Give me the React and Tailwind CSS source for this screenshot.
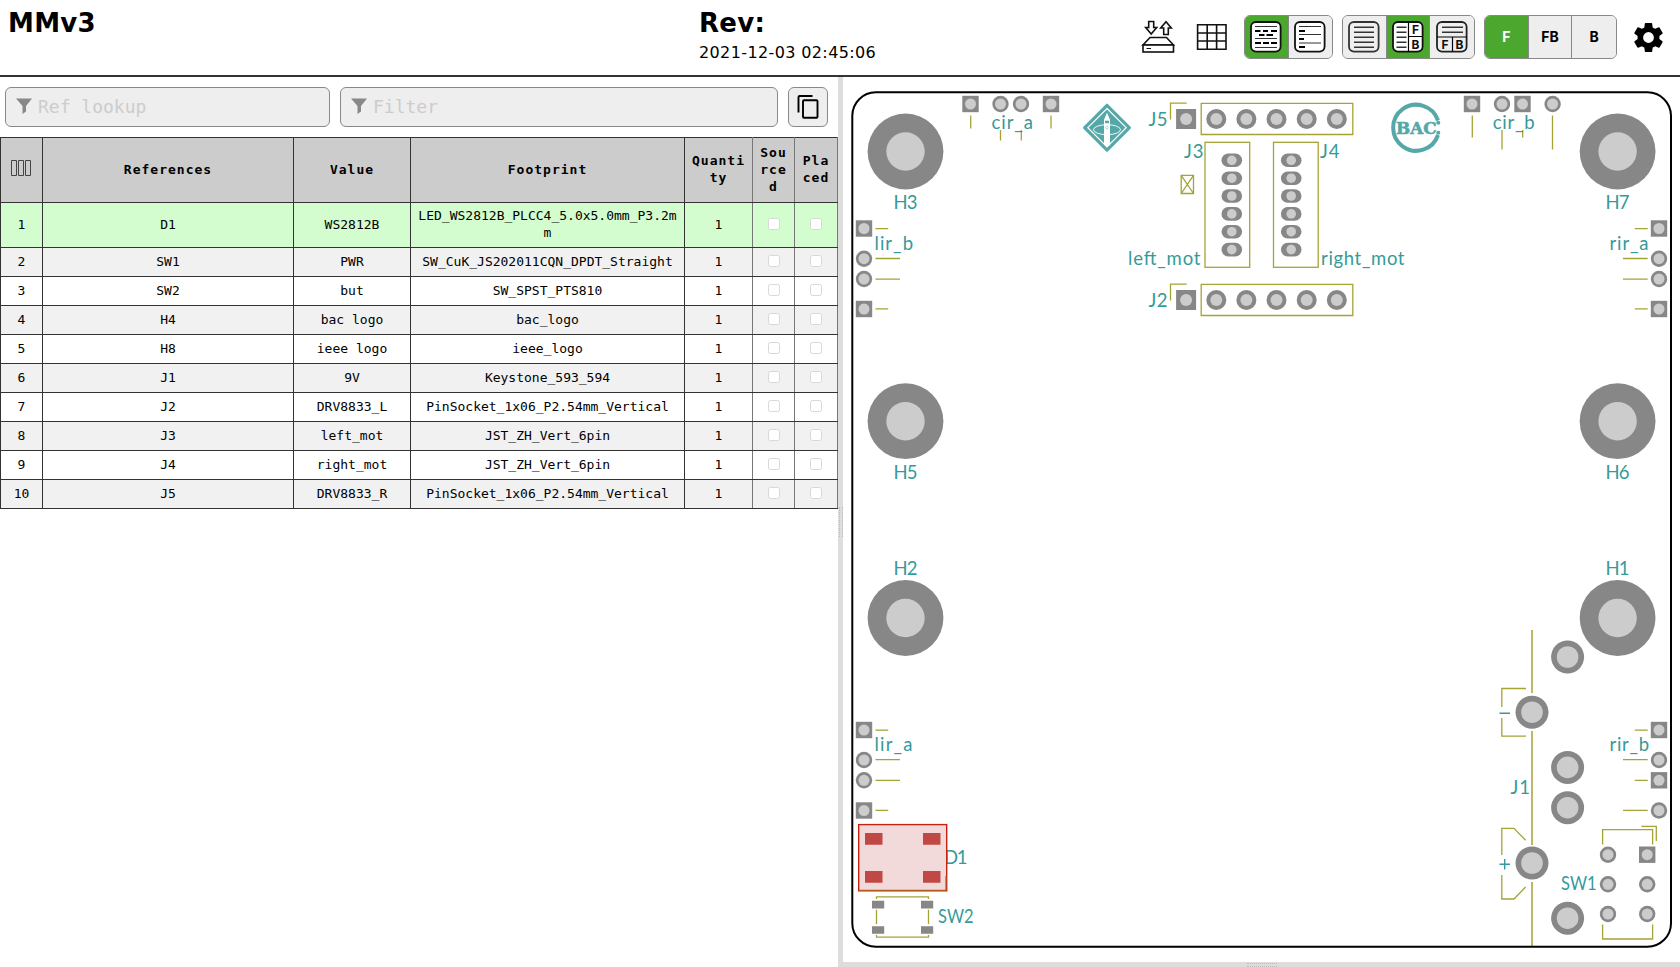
import React from "react";

const MONO = "font-['DejaVu_Sans_Mono',monospace]";

const rows = [
  ["D1", "WS2812B", "LED_WS2812B_PLCC4_5.0x5.0mm_P3.2mm"],
  ["SW1", "PWR", "SW_CuK_JS202011CQN_DPDT_Straight"],
  ["SW2", "but", "SW_SPST_PTS810"],
  ["H4", "bac logo", "bac_logo"],
  ["H8", "ieee logo", "ieee_logo"],
  ["J1", "9V", "Keystone_593_594"],
  ["J2", "DRV8833_L", "PinSocket_1x06_P2.54mm_Vertical"],
  ["J3", "left_mot", "JST_ZH_Vert_6pin"],
  ["J4", "right_mot", "JST_ZH_Vert_6pin"],
  ["J5", "DRV8833_R", "PinSocket_1x06_P2.54mm_Vertical"],
];

function Icon({ children, className = "" }) {
  return (
    <svg className={"block " + className} width="32" height="32" viewBox="0 0 32 32" fill="none" stroke="#000">
      {children}
    </svg>
  );
}

function Frame({ stroke = "#111" }) {
  return <rect x="1" y="1" width="29.6" height="29.6" rx="5" fill="#fff" stroke={stroke} strokeWidth="1.8" />;
}

const GROUP = "flex h-11 overflow-hidden rounded-md border border-[#888] bg-[#eee]";

function Cell({ active, last, children }) {
  return (
    <div
      className={
        "flex h-full w-[44px] items-center justify-center " +
        (active ? "bg-[#4ba72e] text-white " : "bg-[#eee] text-black ") +
        (last ? "" : "border-r border-[#888]")
      }
    >
      {children}
    </div>
  );
}

function Letter({ x, y, children }) {
  return (
    <text x={x} y={y} fontFamily="Inter, sans-serif" fontWeight="700" fontSize="12" textAnchor="middle" fill="#111" stroke="none">
      {children}
    </text>
  );
}

function Toolbar() {
  return (
    <div className="flex h-full items-center">
      <svg className="block" width="34" height="34" viewBox="0 0 34 34" fill="#fff" stroke="#111" strokeWidth="1.6">
        <path d="M7.7 1.5h5v6h3L10.2 14 4.700 7.500h3z" />
        <path d="M22.700 14.500V8h-3L25 1.800l5.300 6.200h-3v6.500z" />
        <path d="M9 17.500h16.500l7 7.500H2z" />
        <rect x="2" y="25" width="30.500" height="7" />
        <path d="M5.500 28.500h4.500" strokeWidth="1" />
      </svg>
      <svg className="ml-[21px] block" width="32" height="28" viewBox="0 0 32 28" fill="none" stroke="#111" strokeWidth="1.600">
        <path d="M1.600 1.800h28.400v24.400H1.600zM1.600 10h28.400M1.600 18h28.400M11.200 1.800v24.400M20.600 1.800v24.400" />
      </svg>
      <div className={GROUP + " ml-[16px] w-[89px]"}>
        <Cell active>
          <Icon>
            <Frame />
            <path d="M5 5.500h22M5 17.500h22M5 26.500h22" strokeWidth="1" stroke="#333" />
            <path d="M5 10h5.500m2.500 0h5m3 0h6M9 14h5.500m2 0h6.500M5 22h6m2 0h6m2 0h6" strokeWidth="1.800" />
          </Icon>
        </Cell>
        <Cell last>
          <Icon>
            <Frame />
            <path d="M5 5.500h22M5 13.500h22M5 22h22" strokeWidth="1" stroke="#333" />
            <path d="M5 10h6M5 18h5M5 26h6" strokeWidth="1.800" />
          </Icon>
        </Cell>
      </div>
      <div className={GROUP + " ml-[9px] w-[133px]"}>
        <Cell>
          <Icon>
            <rect x="1" y="1" width="29.600" height="29.600" rx="5" fill="#eee" stroke="#333" strokeWidth="1.800" />
            <path d="M6 6.200h20M6 11.200h20M6 16.200h20M6 21.200h20M6 26.200h20" stroke="#333" strokeWidth="1.500" />
          </Icon>
        </Cell>
        <Cell active>
          <Icon>
            <Frame />
            <path d="M4.500 6.200h10M4.500 11.200h10M4.500 16.200h10M4.500 21.200h10M4.500 26.200h10" stroke="#333" strokeWidth="1.500" />
            <path d="M16.500 1v29.600M16.500 15.500h14" strokeWidth="1.200" />
            <Letter x="23.500" y="12.800">F</Letter>
            <Letter x="23.500" y="27.500">B</Letter>
          </Icon>
        </Cell>
        <Cell last>
          <Icon>
            <rect x="1" y="1" width="29.600" height="29.600" rx="5" fill="#eee" stroke="#222" strokeWidth="1.800" />
            <path d="M6 6.200h21M6 11.200h21" stroke="#333" strokeWidth="1.500" />
            <path d="M1 16h29.600M16.500 16v14.500" strokeWidth="1.200" />
            <Letter x="9" y="27.500">F</Letter>
            <Letter x="23.500" y="27.500">B</Letter>
          </Icon>
        </Cell>
      </div>
      <div className={GROUP + " ml-[9px] w-[133px] font-['Inter',sans-serif] text-sm font-bold"}>
        <Cell active>F</Cell>
        <Cell>FB</Cell>
        <Cell last>B</Cell>
      </div>
      <svg className="ml-[14px] block" width="35" height="35" viewBox="0 0 24 24" fill="#000">
        <path d="M19.430 12.980c.04-.32.07-.64.07-.98s-.03-.66-.07-.98l2.110-1.650c.19-.15.24-.42.12-.64l-2-3.460c-.12-.22-.39-.3-.61-.22l-2.490 1c-.52-.4-1.080-.73-1.690-.98l-.38-2.650C14.460 2.180 14.250 2 14 2h-4c-.25 0-.46.18-.49.42l-.38 2.650c-.61.25-1.170.59-1.690.98l-2.490-1c-.23-.09-.49 0-.61.22l-2 3.460c-.13.22-.07.49.12.64l2.110 1.650c-.04.32-.07.65-.07.98s.03.66.07.98l-2.110 1.650c-.19.15-.24.42-.12.64l2 3.460c.12.22.39.3.61.22l2.490-1c.52.4 1.080.73 1.690.98l.38 2.650c.03.24.24.42.49.42h4c.25 0 .46-.18.49-.42l.38-2.650c.61-.25 1.170-.59 1.690-.98l2.490 1c.23.09.49 0 .61-.22l2-3.460c.12-.22.07-.49-.12-.64l-2.110-1.650zM12 15.700a3.700 3.700 0 1 1 0-7.400 3.700 3.700 0 0 1 0 7.400z" />
      </svg>
    </div>
  );
}

function Search({ text, className }) {
  return (
    <div className={"flex h-10 items-center rounded-md border border-[#888] bg-[#eee] pl-[10px] " + className}>
      <svg className="-mt-[2px] mr-[6px] block" width="16" height="16" viewBox="0 0 16 16" fill="#888">
        <path d="M0 0.500h16L10 8v5.500L6.500 16V8z" />
      </svg>
      <span className={MONO + " text-[18px] leading-none text-[#ccc]"}>{text}</span>
    </div>
  );
}

const TD = "border border-[#333] p-0 pb-[2px]";
const TDN = "border border-y-[#333] border-x-[#777] p-0 pb-[2px]";

function Check() {
  return <div className="mx-auto h-3 w-3 rounded-[2.5px] border border-[#d8d8d8] bg-white" />;
}

function Bom() {
  return (
    <table className={MONO + " w-[837px] table-fixed border-collapse text-center text-[13px] leading-[17px] text-black"}>
      <colgroup>
        <col className="w-[42px]" />
        <col className="w-[251px]" />
        <col className="w-[117px]" />
        <col className="w-[274px]" />
        <col className="w-[68px]" />
        <col className="w-[42px]" />
        <col className="w-[43px]" />
      </colgroup>
      <thead>
        <tr className="h-[65px] bg-[#ccc] font-bold tracking-[1px]">
          <th className={TD}>
            <svg className="mx-auto -mt-[3px] block" width="21" height="16" viewBox="0 0 21 16" fill="none" stroke="#444" strokeWidth="1">
              <path d="M0.500 0.500h5v15h-5zM7.500 0.500h5v15h-5zM14.500 0.500h5v15h-5z" />
            </svg>
          </th>
          <th className={TD}>References</th>
          <th className={TD}>Value</th>
          <th className={TD}>Footprint</th>
          <th className={TDN}>Quanti<br />ty</th>
          <th className={TDN}>Sou<br />rce<br />d</th>
          <th className={TDN}>Pla<br />ced</th>
        </tr>
      </thead>
      <tbody>
        {rows.map((r, i) => (
          <tr key={r[0]} className={i === 0 ? "h-[45px] bg-[#d3fdce]" : i % 2 ? "h-[29px] bg-[#f1f1f1]" : "h-[29px] bg-white"}>
            <td className={TD}>{i + 1}</td>
            <td className={TD}>{r[0]}</td>
            <td className={TD}>{r[1]}</td>
            <td className={TD + " px-[5px] break-all"}>{r[2]}</td>
            <td className={TDN}>1</td>
            <td className={TDN}><Check /></td>
            <td className={TDN}><Check /></td>
          </tr>
        ))}
      </tbody>
    </table>
  );
}

const PAD = "#878787";
const HOLE = "#cccccc";

function Round({ x, y, r = 8.2, h = 5.5 }) {
  return (
    <g stroke="none">
      <circle cx={x} cy={y} r={r} fill={PAD} />
      <circle cx={x} cy={y} r={h} fill={HOLE} />
    </g>
  );
}

function Square({ x, y, s = 16.4, h = 5.5 }) {
  return (
    <g stroke="none">
      <rect x={x - s / 2} y={y - s / 2} width={s} height={s} fill={PAD} />
      <circle cx={x} cy={y} r={h} fill={HOLE} />
    </g>
  );
}

function Label({ x, y, w, fit = "spacing", children }) {
  return (
    <text x={x} y={y} textLength={w} lengthAdjust={fit} fontFamily="Lato, sans-serif" fontSize="18.500" fill="#359a99">
      {children}
    </text>
  );
}

function Header6({ y, name }) {
  return (
    <g>
      <path d={`M1170.500 ${y + 0.5}V${y - 15.9}H1186.700M1201.200 ${y - 15.700}H1352.800V${y + 15.500}H1201.200Z`} />
      <Square x={1186.1} y={y} s={20} h={6} />
      {[1216.3, 1246.4, 1276.5, 1306.7, 1336.8].map((x) => (
        <Round key={x} x={x} y={y} r={10} h={6} />
      ))}
      <g stroke="none"><Label x={1148.5} y={y + 6.5} w={19}>{name}</Label></g>
    </g>
  );
}

function Jst({ x, px }) {
  return (
    <g>
      <rect x={x} y="142.300" width="44.700" height="125" />
      {[160.3, 178.2, 196, 213.9, 231.7, 249.6].map((y) => (
        <g key={y} stroke="none">
          <rect x={px - 10.300} y={y - 6.800} width="20.600" height="13.600" rx="6.800" fill={PAD} />
          <circle cx={px} cy={y} r="4.800" fill={HOLE} />
        </g>
      ))}
    </g>
  );
}

function Board() {
  return (
    <svg className="block" width="837" height="885" viewBox="843 77 837 885" fill="none">
      <g stroke="#a5a336" strokeWidth="1.300">
        <path d="M970.700 115.500v13M1051 115.500v13M1000.500 130v10.500M1021.300 130v10.500" />
        <path d="M1472.300 115.500v22M1502 130v19.500M1522.700 130v7.500M1552.500 115.500v34" />
        <path d="M875.500 228.600h12.700M875.500 258.500h24.500M875.500 279.200h24.500M875.500 308.800h12.700" />
        <path d="M875.500 730.200h12.700M875.500 759.700h24.500M875.500 780.400h24.500M875.500 810.300h12.700" />
        <path d="M1634.800 228.600h12.900M1623 258.500h24.700M1623 279.200h24.700M1634.800 308.800h12.900" />
        <path d="M1634.800 730.200h12.900M1623 759.700h24.700M1634.800 780.400h12.900M1623 810.300h24.700" />
        <path d="M1181.200 175.300h12.300v18.200h-12.300zl12.300 18.200M1193.500 175.300l-12.300 18.200" />
        <path d="M1532 630v63M1532 731v114M1532 882v64" strokeWidth="1.500" />
        <path d="M1526 688.500H1501.800V707M1501.800 718V736.200H1526" />
        <path d="M1525.600 840.300L1514 828.300H1501.800V855M1501.800 875V899H1514L1525.600 887" />
        <path d="M1602.600 844.500V829.700H1652.600V844.500M1641.400 826.300H1656.300V841M1602.600 924.500V939H1652.600V924.500" />
        <path d="M876.500 899V896.800H928.500V899M876.500 935V937.200H928.500V935M876.500 909.700V924M928.500 909.700V924" />
        <Header6 y={119} name="J5" />
        <Header6 y={300} name="J2" />
        <Jst x={1205} px={1231.8} />
        <Jst x={1273.5} px={1291.2} />
      </g>
      <rect x="852.300" y="92.300" width="818.700" height="854.400" rx="23.500" stroke="#000" strokeWidth="2" />

      {[[905.5, 151.5], [1617.6, 151.5], [905.5, 421.2], [1617.6, 421.2], [905.5, 618], [1617.6, 618]].map(([x, y]) => (
        <Round key={x + "-" + y} x={x} y={y} r={37.9} h={19.2} />
      ))}
      <Square x={970.5} y={104} />
      <Round x={1000.5} y={104} />
      <Round x={1021} y={104} />
      <Square x={1051} y={104} />
      <Square x={1472} y={104} />
      <Round x={1502} y={104} />
      <Square x={1522.5} y={104} />
      <Round x={1552.6} y={104} />
      {[864, 1659].map((x) => (
        <g key={x}>
          <Square x={x} y={228.5} />
          <Round x={x} y={258.7} />
          <Round x={x} y={279} />
          <Square x={x} y={309} />
          <Square x={x} y={730} />
          <Round x={x} y={760} />
        </g>
      ))}
      <Round x={864} y={780.3} />
      <Square x={864} y={810.5} />
      <Square x={1659} y={780.3} />
      <Round x={1659} y={810.5} />
      {[[1567.6, 657], [1532, 712.2], [1567.6, 767.4], [1567.6, 807.7], [1532, 863], [1567.6, 918.200]].map(([x, y]) => (
        <Round key={x + "-" + y} x={x} y={y} r={16.5} h={10.8} />
      ))}
      <Round x={1608} y={854.7} />
      <Square x={1647.2} y={854.7} />
      <Round x={1608} y={884.3} />
      <Round x={1647.2} y={884.3} />
      <Round x={1608} y={914} />
      <Round x={1647.2} y={914} />

      <Label x={991.5} y={128.6} w={41.5}>cir_a</Label>
      <Label x={1492.8} y={128.6} w={41.8}>cir_b</Label>
      <Label x={874.5} y={250} w={38.5}>lir_b</Label>
      <Label x={874.5} y={751.4} w={38}>lir_a</Label>
      <Label x={1609.5} y={250} w={39}>rir_a</Label>
      <Label x={1609.5} y={751.4} w={39.5}>rir_b</Label>
      <Label x={893.5} y={208.600} w={24}>H3</Label>
      <Label x={1605.5} y={208.600} w={24}>H7</Label>
      <Label x={893.5} y={478.600} w={24}>H5</Label>
      <Label x={1605.5} y={478.600} w={24}>H6</Label>
      <Label x={893.5} y={574.700} w={24}>H2</Label>
      <Label x={1605.5} y={574.700} w={24}>H1</Label>
      <Label x={1184} y={157.900} w={19.5}>J3</Label>
      <Label x={1320} y={157.900} w={19.5}>J4</Label>
      <Label x={1128} y={264.500} w={72.500}>left_mot</Label>
      <Label x={1321} y={264.500} w={83.500}>right_mot</Label>
      <Label x={1510.5} y={794} w={19.5}>J1</Label>
      <Label x={1561} y={890.4} w={35.500} fit="spacingAndGlyphs">SW1</Label>
      <Label x={938} y={923.3} w={35.500} fit="spacingAndGlyphs">SW2</Label>
      <Label x={944} y={864} w={23.5}>D1</Label>
      <path d="M1499.500 713.200h10.500M1499.500 864.300h10.500M1504.700 859v10.500" stroke="#359a99" strokeWidth="1.400" />

      <rect x="858.700" y="824.600" width="88" height="66.200" fill="#f3dada" stroke="#c4220f" strokeWidth="1.400" />
      <path d="M859 890.300H946M946 876V890" stroke="#b35a1c" strokeWidth="1.200" />
      <path d="M865 833h17.500v11.700h-17.500zM923 833h17.500v11.700h-17.500zM865 871h17.500v11.700h-17.500zM923 871h17.500v11.700h-17.500z" fill="#c04946" />
      <path d="M872 900.800h12.200v7.600h-12.200zM921 900.800h12.200v7.600h-12.200zM872 926.200h12.200v7.600h-12.200zM921 926.200h12.200v7.600h-12.200z" fill={PAD} />

      <g transform="translate(1107 127.700)">
        <path d="M0 -22.500L22.500 0L0 22.500L-22.500 0Z" fill="#56a8a8" stroke="#56a8a8" strokeWidth="3" strokeLinejoin="round" />
        <path d="M0 -19.200L19.200 0L0 19.200L-19.200 0Z" stroke="#fff" strokeWidth="1.200" />
        <ellipse cx="0" cy="2" rx="13.500" ry="5" stroke="#fff" strokeWidth="0.900" />
        <path d="M0 -15L3 -8V17L0 19.500L-3 17V-8Z" fill="#fff" />
        <path d="M-2 -7h4v2.500h-4z" fill="#56a8a8" />
        <circle cx="0" cy="0" r="1.300" stroke="#8cc4c4" strokeWidth="0.600" />
      </g>

      <path d="M1438 120.500A23 23 0 1 0 1438 135" stroke="#56a8a8" strokeWidth="4" />
      <text x="1396" y="133.700" textLength="40.500" lengthAdjust="spacingAndGlyphs" fontFamily="'DejaVu Serif', serif" fontWeight="700" fontSize="16" fill="#56a8a8" stroke="#56a8a8" strokeWidth="0.600">BAC</text>
      <circle cx="1438.300" cy="122.800" r="2" fill="#56a8a8" />
      <circle cx="1438.300" cy="132.800" r="2" fill="#56a8a8" />
    </svg>
  );
}

export default function App() {
  return (
    <div className="flex h-[967px] w-[1680px] flex-col overflow-hidden bg-white font-['DejaVu_Sans',sans-serif] text-black">
      <header className="flex h-[77px] shrink-0 border-b-2 border-[#333]">
        <div className="w-[699px] pt-[8px] pl-2 text-[26px] leading-[31px] font-bold tracking-[0.3px]">MMv3</div>
        <div className="w-[442px] pt-[8px]">
          <div className="text-[26px] leading-[31px] font-bold tracking-[0.3px]">Rev:</div>
          <div className="mt-[4px] text-[16px] leading-5 tracking-[0.38px]">2021-12-03 02:45:06</div>
        </div>
        <div className="h-[74px]">
          <Toolbar />
        </div>
      </header>
      <main className="flex min-h-0 flex-1">
        <section className="w-[838px] shrink-0">
          <div className="flex h-[60px] gap-[10px] pt-[10px] pl-[5px]">
            <Search text="Ref lookup" className="w-[325px]" />
            <Search text="Filter" className="w-[438px]" />
            <div className="flex h-10 w-10 items-center justify-center rounded-md border border-[#888] bg-[#eee]">
              <svg className="block" width="24" height="26" viewBox="0 0 24 26" fill="none" stroke="#000" strokeWidth="1.900">
                <path d="M2.500 18.500V3.200Q2.500 2 3.700 2H16.500" />
                <rect x="7" y="6.300" width="14.500" height="17.500" rx="1" />
              </svg>
            </div>
          </div>
          <Bom />
        </section>
        <div className="flex w-[5px] shrink-0 items-center justify-center bg-[#ddd]">
          <div className="h-[30px] border-x border-dotted border-[#bbb] px-px" />
        </div>
        <section className="flex min-w-0 flex-1 flex-col">
          <Board />
          <div className="flex h-[5px] items-center justify-center bg-[#ddd]">
            <div className="w-[30px] border-y border-dotted border-[#bbb] py-px" />
          </div>
        </section>
      </main>
    </div>
  );
}
